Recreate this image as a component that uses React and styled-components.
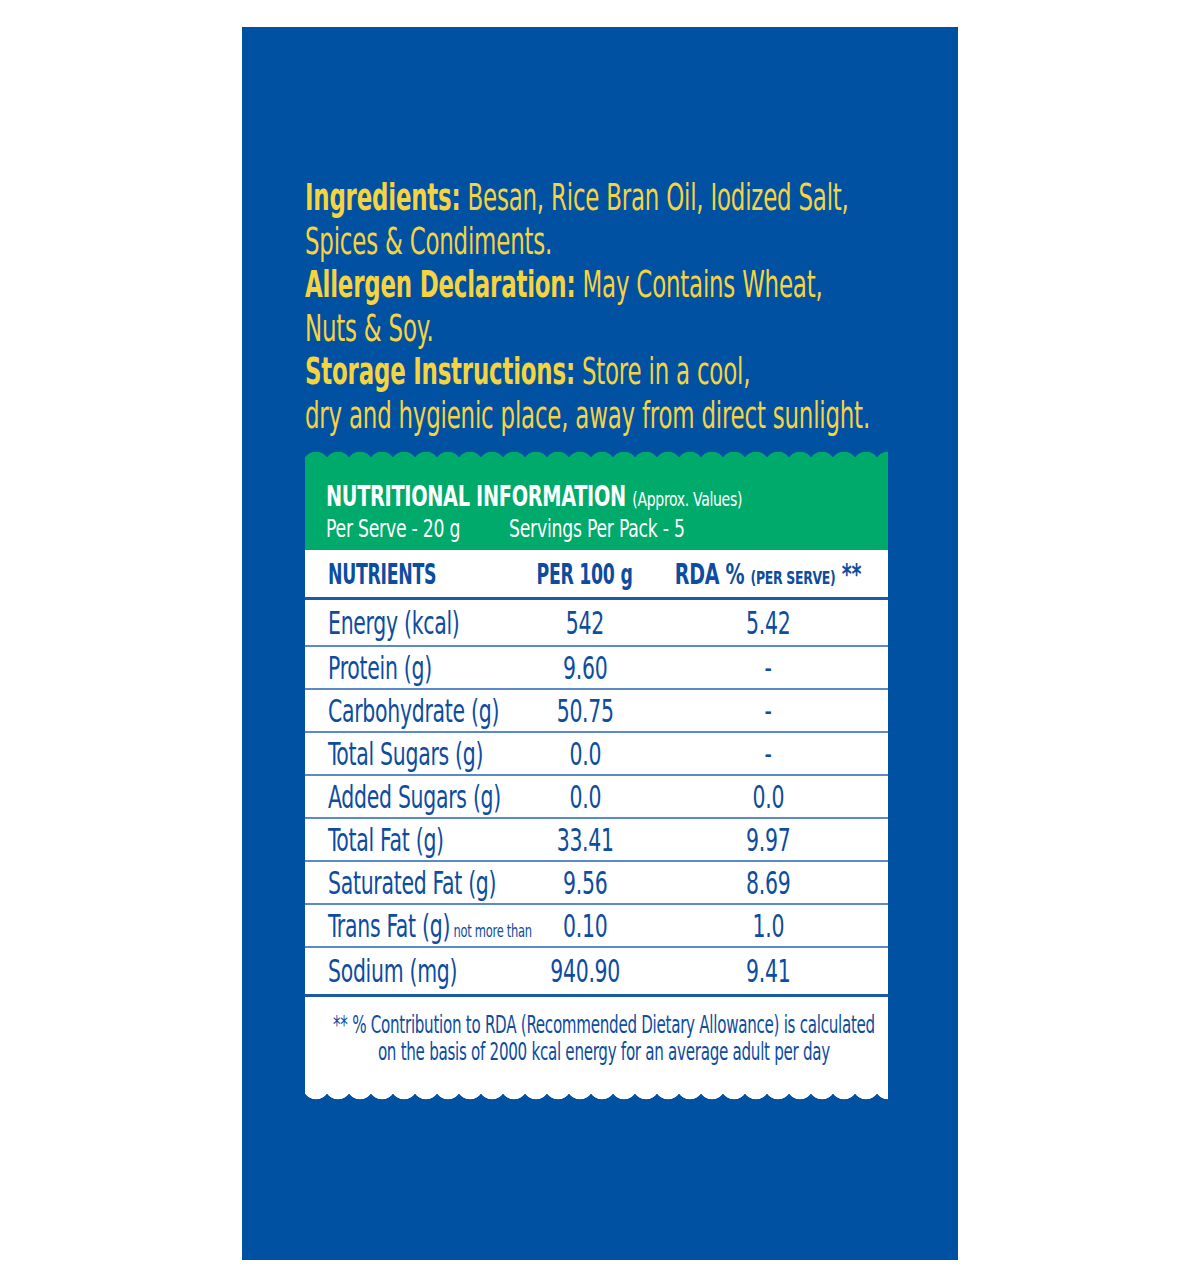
import React from 'react';
import styled, { createGlobalStyle } from 'styled-components';

const GlobalStyle = createGlobalStyle`
  body {
    margin: 0;
    background: #ffffff;
    font-family: "DejaVu Sans Condensed", "DejaVu Sans", "Liberation Sans", sans-serif;
    font-stretch: condensed;
  }
`;

const BLUE = '#0151a2';
const INK = '#0d4c9f';
const GREEN = '#00aa6b';
const YELLOW = '#f6d43f';

const rows = [
  { name: 'Energy (kcal)', per100: '542', rda: '5.42', h: 47 },
  { name: 'Protein (g)', per100: '9.60', rda: '-' },
  { name: 'Carbohydrate (g)', per100: '50.75', rda: '-' },
  { name: 'Total Sugars (g)', per100: '0.0', rda: '-' },
  { name: 'Added Sugars (g)', per100: '0.0', rda: '0.0' },
  { name: 'Total Fat (g)', per100: '33.41', rda: '9.97' },
  { name: 'Saturated Fat (g)', per100: '9.56', rda: '8.69' },
  { name: 'Trans Fat (g)', note: 'not more than', per100: '0.10', rda: '1.0' },
  { name: 'Sodium (mg)', per100: '940.90', rda: '9.41', h: 49, last: true },
];

const App = () => {
  return (
    <Page>
      <GlobalStyle />
      <Pack>
        <Info>
          <Para>
            <Label>Ingredients:</Label> Besan, Rice Bran Oil, Iodized Salt,<br />
            Spices &amp; Condiments.
          </Para>
          <Para>
            <Label>Allergen Declaration:</Label> May Contains Wheat,<br />
            Nuts &amp; Soy.
          </Para>
          <Para>
            <Label>Storage Instructions:</Label> Store in a cool,<br />
            dry and hygienic place, away from direct sunlight.
          </Para>
        </Info>

        <NutritionLabel>
          <TopEdge />
          <GreenHead>
            <Title>
              <Narrow $s={0.78}>
                NUTRITIONAL INFORMATION <small>(Approx. Values)</small>
              </Narrow>
            </Title>
            <Serve>
              <Narrow $s={0.8}>Per Serve - 20 g</Narrow>
              <Narrow $s={0.8}>Servings Per Pack - 5</Narrow>
            </Serve>
          </GreenHead>

          <HeadRow>
            <Cell>
              <Narrow $s={0.7}>NUTRIENTS</Narrow>
            </Cell>
            <Cell $center>
              <Narrow $s={0.7} $o="center">PER 100 g</Narrow>
            </Cell>
            <Cell $center>
              <Narrow $s={0.77} $o="center">
                RDA % <small>(PER SERVE)</small> **
              </Narrow>
            </Cell>
          </HeadRow>

          {rows.map((r) => (
            <Row key={r.name} $h={r.h} $last={r.last}>
              <Cell>
                <Narrow $s={0.71}>
                  {r.name}
                  {r.note && <Note> {r.note}</Note>}
                </Narrow>
              </Cell>
              <Cell $center>
                <Narrow $s={0.71} $o="center">{r.per100}</Narrow>
              </Cell>
              <Cell $center>
                <Narrow $s={0.71} $o="center">{r.rda}</Narrow>
              </Cell>
            </Row>
          ))}

          <Footnote>
            <Narrow $s={0.7} $o="center">
              ** % Contribution to RDA (Recommended Dietary Allowance) is calculated
            </Narrow>
            <Narrow $s={0.7} $o="center">
              on the basis of 2000 kcal energy for an average adult per day
            </Narrow>
          </Footnote>
          <BottomEdge />
        </NutritionLabel>
      </Pack>
    </Page>
  );
};

export default App;

const Page = styled.div`
  display: flex;
  justify-content: center;
  padding: 27px 0 26px;
  overflow: hidden;
`;

const Pack = styled.div`
  width: 716px;
  height: 1233px;
  box-sizing: border-box;
  background: ${BLUE};
  padding: 149px 70px 0 63px;
  display: flex;
  flex-direction: column;
`;

// the pack print uses a very narrow face, so squeeze the text horizontally
const Narrow = styled.span`
  display: inline-block;
  white-space: nowrap;
  transform: scaleX(${(p) => p.$s || 0.7});
  transform-origin: ${(p) => p.$o || 'left'} center;
`;

const Info = styled.div`
  color: ${YELLOW};
  font-size: 38px;
  line-height: 43.5px;
  letter-spacing: -0.3px;
  white-space: nowrap;
  transform: scaleX(0.67);
  transform-origin: left top;
`;

const Para = styled.p`
  margin: 0;
`;

const Label = styled.b`
  font-weight: 700;
`;

const NutritionLabel = styled.div`
  margin-top: 14px;
  width: 583px;
  display: flex;
  flex-direction: column;
  background: #ffffff;
`;

const TopEdge = styled.div`
  height: 8px;
  background: radial-gradient(circle at 50% 14px, ${GREEN} 13px, transparent 13.6px) 0 0 / 22px 8px repeat-x;
  background-color: ${BLUE};
`;

const BottomEdge = styled.div`
  height: 10px;
  background: radial-gradient(circle at 50% -5px, #ffffff 13px, transparent 13.6px) 0 0 / 22px 10px repeat-x;
  background-color: ${BLUE};
`;

const GreenHead = styled.div`
  background: ${GREEN};
  color: #ffffff;
  height: 91px;
  box-sizing: border-box;
  padding: 22px 20px 0 21px;
`;

const Title = styled.div`
  font-size: 27.5px;
  font-weight: 700;
  line-height: 30px;
  letter-spacing: -0.4px;

  small {
    font-size: 20px;
    font-weight: 400;
  }
`;

const Serve = styled.div`
  display: grid;
  grid-template-columns: 183px auto;
  font-size: 24px;
  line-height: 30px;
  letter-spacing: -0.3px;
`;

const Grid = styled.div`
  display: grid;
  grid-template-columns: 182px 150px 1fr;
  align-items: center;
  padding: 0 12px 0 23px;
  color: ${INK};
  box-sizing: border-box;
`;

const Cell = styled.div`
  display: flex;
  align-items: center;
  justify-content: ${(p) => (p.$center ? 'center' : 'flex-start')};
  min-width: 0;
`;

const HeadRow = styled(Grid)`
  height: 50px;
  font-size: 27.5px;
  font-weight: 700;
  letter-spacing: -0.4px;
  border-bottom: 3px solid #1a5aa8;

  small {
    font-size: 18px;
  }
`;

const Row = styled(Grid)`
  height: ${(p) => p.$h || 43}px;
  font-size: 32px;
  letter-spacing: -0.4px;
  border-bottom: ${(p) => (p.$last ? '3px solid #1a5aa8' : '2px solid #5a8ac8')};
`;

const Note = styled.small`
  font-size: 18px;
  letter-spacing: -0.4px;
`;

const Footnote = styled.div`
  color: ${INK};
  font-size: 24px;
  line-height: 27px;
  letter-spacing: -0.4px;
  display: flex;
  flex-direction: column;
  align-items: center;
  padding: 15px 0 0 14px;
  height: 94px;
  box-sizing: border-box;
`;
